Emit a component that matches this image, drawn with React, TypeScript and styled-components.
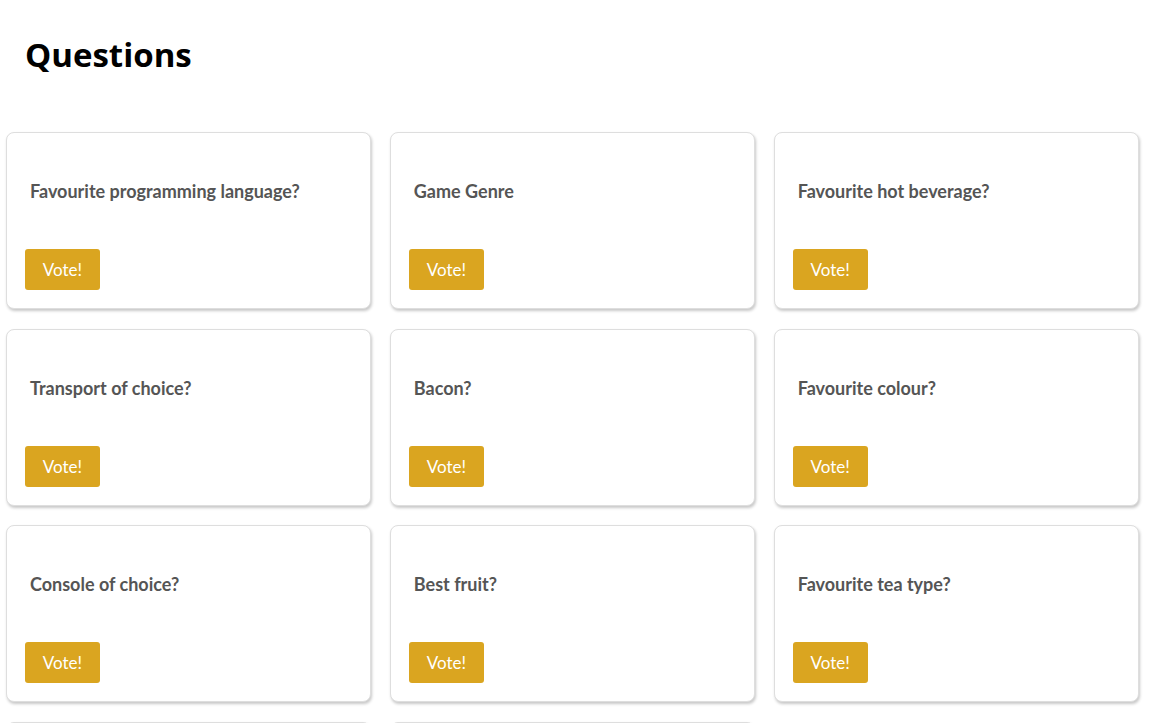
import React from "react";
import styled, { createGlobalStyle } from "styled-components";

const Global = createGlobalStyle`
  html, body { margin: 0; padding: 0; background: #fff; }
  body { font-family: "Lato", "Open Sans", sans-serif; }
`;

const Page = styled.div`
  padding: 0 28px 0 6px;
`;

const Title = styled.h1`
  margin: 0;
  padding: 33px 0 0 19px;
  height: 98px;
  box-sizing: border-box;
  font-family: "Open Sans", sans-serif;
  font-weight: 700;
  font-size: 33px;
  line-height: 44px;
  color: #000;
`;

const Grid = styled.div`
  display: grid;
  grid-template-columns: repeat(3, 1fr);
  column-gap: 18.5px;
  row-gap: 19.5px;
  padding-top: 34px;
`;

const Card = styled.div`
  box-sizing: border-box;
  height: 177px;
  border: 1px solid #dedede;
  border-radius: 8px;
  box-shadow: 1px 2px 3px rgba(0, 0, 0, 0.22);
  background: #fff;
  padding: 46px 18px 0 18px;
  display: flex;
  flex-direction: column;
`;

const Question = styled.div`
  padding-left: 5px;
  font-family: "Lato", sans-serif;
  font-weight: 700;
  font-size: 18px;
  line-height: 24px;
  color: #555;
  height: 70px;
`;

const VoteButton = styled.button`
  align-self: flex-start;
  width: 75px;
  height: 41px;
  border: none;
  border-radius: 3px;
  background: #daa520;
  color: #fff;
  font-family: "Lato", sans-serif;
  font-size: 17px;
  padding: 0;
  cursor: pointer;
`;

const questions = [
  "Favourite programming language?",
  "Game Genre",
  "Favourite hot beverage?",
  "Transport of choice?",
  "Bacon?",
  "Favourite colour?",
  "Console of choice?",
  "Best fruit?",
  "Favourite tea type?",
  "",
  "",
];

export default function App() {
  return (
    <>
      <Global />
      <Page>
        <Title>Questions</Title>
        <Grid>
          {questions.map((q, i) => (
            <Card key={i}>
              <Question>{q}</Question>
              <VoteButton>Vote!</VoteButton>
            </Card>
          ))}
        </Grid>
      </Page>
    </>
  );
}
